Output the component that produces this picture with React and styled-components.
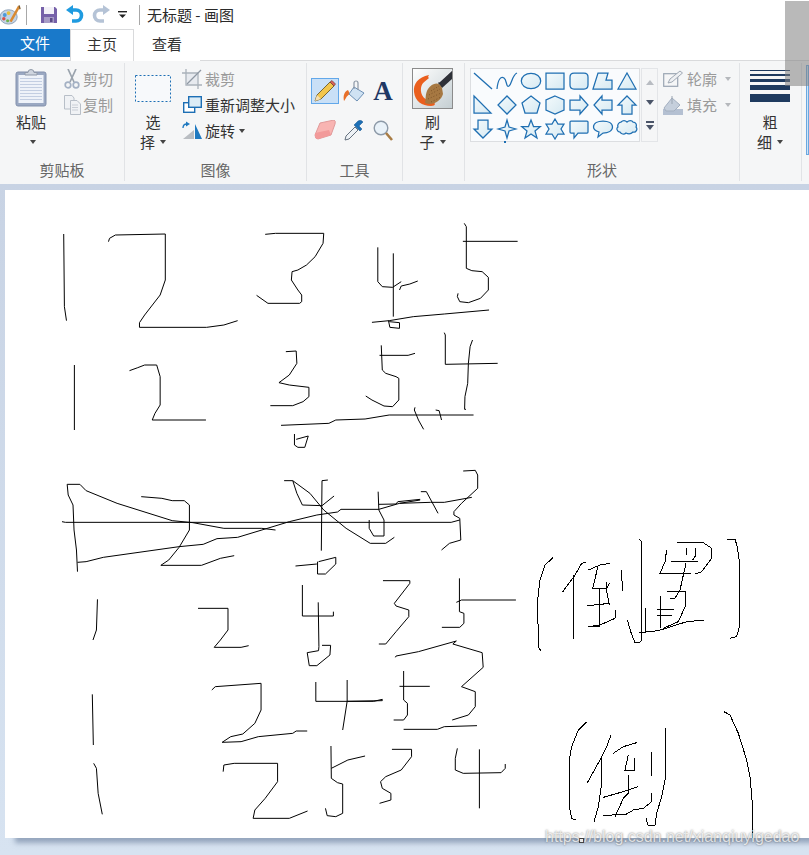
import React from "react";
import styled, { createGlobalStyle } from "styled-components";

const Global = createGlobalStyle`
  html, body { margin: 0; padding: 0; background: #fff; }
  body { font-family: "Noto Sans CJK SC", "Liberation Sans", sans-serif; overflow: hidden; }
  * { box-sizing: border-box; }
`;
const Page = styled.div`
  position: relative; width: 809px; height: 855px; display: flex; flex-direction: column; overflow: hidden; background: #fff;
`;
const TitleBar = styled.div`
  height: 29px; display: flex; align-items: center; background: #fff;
`;
const QuickIcon = styled.span`
  display: flex; align-items: center; justify-content: center; width: ${p => p.$w}px; margin-left: ${p => p.$ml || 0}px;
`;
const Sep = styled.span`
  width: 1px; height: 20px; background: #a8a8a8; margin-left: ${p => p.$ml}px;
`;
const TitleText = styled.span`
  margin-left: 7px; font-size: 15px; color: #2a2a2a; line-height: 20px; white-space: pre;
`;
const Tabs = styled.div`
  height: 32px; display: flex; align-items: flex-start; border-bottom: 1px solid #d9dadc; background: #fff;
`;
const FileTab = styled.div`
  width: 70px; height: 28px; background: #1979ca; color: #fff; font-size: 15px; padding-bottom: 1px; display: flex; align-items: center; justify-content: center;
`;
const Tab = styled.div`
  width: ${p => p.$active ? 64 : 66}px; height: 32px; padding-bottom: 4px; font-size: 15px; color: #333; display: flex; align-items: center; justify-content: center;
  background: #fff; border: 1px solid ${p => p.$active ? "#d9dadc" : "transparent"}; border-bottom: 0; position: relative;
  z-index: ${p => p.$active ? 1 : 0}; margin-bottom: -1px;
`;
const Ribbon = styled.div`
  height: 123px; display: flex; background: #f5f6f7;
`;
const Group = styled.section`
  width: ${p => p.$w}px; margin: 2px 0 3px; border-right: 1px solid #e1e3e6; display: flex; flex-direction: column;
`;
const LastGroup = styled.section`
  flex: 1; padding-left: 4px; padding-top: 4px;
`;
const ColorSlot = styled.div`
  height: 90px; background: #cfe4f7; border: 1px solid #6aa7e0;
`;
const GroupBody = styled.div`
  flex: 1; display: flex; padding: 3px 0 0 ${p => p.$pl || 0}px; min-height: 0;
`;
const GroupLabel = styled.div`
  height: 20px; line-height: 18px; text-align: center; font-size: 15px; color: #666;
`;
const BigButton = styled.div`
  width: ${p => p.$w}px; display: flex; flex-direction: column; align-items: center; flex: none;
`;
const BigIcon = styled.div`
  height: 46px; display: flex; align-items: center; justify-content: center; padding-bottom: 2px;
`;
const BigLine = styled.div`
  height: 20px; line-height: 20px; font-size: 15px; color: #333; display: flex; align-items: center; gap: ${p => p.$gap ?? 5}px; white-space: nowrap;
`;
const Caret = styled.i`
  display: inline-block; width: 0; height: 0; border-left: 3.5px solid transparent; border-right: 3.5px solid transparent;
  border-top: 4px solid ${p => p.$muted ? "#b5b8bc" : "#444"}; margin-left: ${p => p.$ml || 0}px;
`;
const SmallCol = styled.div`
  display: flex; flex-direction: column; margin-left: ${p => p.$ml || 0}px;
`;
const SmallRow = styled.div`
  height: 26px; padding-bottom: 1px; display: flex; align-items: center; gap: ${p => p.$gap ?? 4}px; font-size: 15px; color: ${p => p.$muted ? "#9a9a9a" : "#333"}; white-space: nowrap;
`;
const SmallIcon = styled.span`
  width: 20px; height: 20px; display: flex; align-items: center; justify-content: center; flex: none;
`;
const ToolGrid = styled.div`
  margin: 12px 0 0 4px; display: grid; grid-template-columns: 28px 28px 28px; grid-template-rows: 26px 26px; column-gap: 1px; row-gap: 13px;
`;
const Tool = styled.div`
  display: flex; align-items: center; justify-content: center;
  border: 1px solid ${p => p.$on ? "#62a8ea" : "transparent"}; background: ${p => p.$on ? "#c9e0f7" : "transparent"};
`;
const TextToolGlyph = styled.span`
  font-family: "Liberation Serif", serif; font-weight: 700; font-size: 27px; line-height: 26px; color: #1f3864;
`;
const Gallery = styled.div`
  position: relative; margin-top: 2px; width: 170px; height: 74px; display: grid; grid-template-columns: repeat(7, 24px); grid-auto-rows: 24px;
  border: 1px solid #dcdee1; background: #f9fbfd;
  &::after { content: ""; position: absolute; left: 33px; bottom: -2px; width: 2px; height: 2px; background: #1f6fb2; }
`;
const ShapeCell = styled.div`
  display: flex; align-items: center; justify-content: center;
`;
const ScrollBox = styled.div`
  margin: 2px 0 0 1px; width: 17px; height: 74px; border: 1px solid #e3e5e8; display: flex; flex-direction: column; align-items: center; justify-content: space-around; padding: 3px 0;
`;
const ScrollUp = styled.i`
  width: 0; height: 0; border-left: 4px solid transparent; border-right: 4px solid transparent; border-bottom: 5px solid #b8bcc2;
`;
const ScrollDown = styled.i`
  width: 0; height: 0; border-left: 4px solid transparent; border-right: 4px solid transparent; border-top: 5px solid #4a5468;
`;
const ScrollMore = styled.div`
  display: flex; flex-direction: column; align-items: center; gap: 2px;
  &::before { content: ""; width: 8px; height: 2px; background: #4a5468; }
  &::after { content: ""; width: 0; height: 0; border-left: 4px solid transparent; border-right: 4px solid transparent; border-top: 5px solid #4a5468; }
`;
const Workspace = styled.main`
  flex: 1; padding: 6px 0 0 5px; background: linear-gradient(#c8d3e4, #d7e3f1);
`;
const Canvas = styled.div`
  height: 648px; background: #fff; box-shadow: 8px 7px 5px -2px rgba(105, 125, 155, .6);
`;
const Drawing = styled.svg`
  display: block; width: 804px; height: 648px;
`;
const Handle = styled.div`
  position: absolute; left: 579px; top: 838px; width: 5px; height: 5px; background: #fff; border: 1px solid #444;
`;
const Watermark = styled.div`
  position: absolute; left: 545px; top: 827px; font-family: "Liberation Sans", sans-serif; font-size: 16px; line-height: 20px; color: rgba(255,255,255,.75);
  text-shadow: 0 0 2px rgba(70,70,70,.75); white-space: nowrap;
`;
const ScrollOverlay = styled.div`
  position: absolute; right: 0; top: 1px; width: 24px; height: 85px; background: rgba(128,128,128,.55);
`;

const Palette = () => (
  <svg width="22" height="22" viewBox="0 0 22 22">
    <ellipse cx="9" cy="13" rx="9" ry="7.5" fill="#c3d3e4" stroke="#8ea2b8" />
    <circle cx="5" cy="11" r="2" fill="#4d9ad8" /><circle cx="9" cy="9" r="2" fill="#e8c13a" /><circle cx="4" cy="15" r="1.8" fill="#d8504a" /><circle cx="8" cy="17" r="1.6" fill="#6fb34c" />
    <path d="M20 2 L11 18" stroke="#d98a32" strokeWidth="2.6" /><path d="M20 1 L21 5" stroke="#7a5a30" strokeWidth="1.4" />
  </svg>
);
const Save = () => (
  <svg width="16" height="16" viewBox="0 0 16 16">
    <path d="M0 0 H14 L16 2 V16 H0Z" fill="#7661a9" /><rect x="3" y="0" width="10" height="7" fill="#f3f1f8" /><rect x="3" y="10" width="10" height="6" fill="#a79cc6" /><rect x="9" y="11" width="2.5" height="4" fill="#5a4a86" />
  </svg>
);
const Undo = ({ color, flip }) => (
  <svg width="18" height="19" viewBox="0 0 18 19" style={flip ? { transform: "scaleX(-1)" } : undefined}>
    <path d="M5 5 H10 A5.5 5.5 0 0 1 10 16 H6" fill="none" stroke={color} strokeWidth="3.6" /><path d="M0 5 L7 0 V10Z" fill={color} />
  </svg>
);
const QuickCaret = () => (
  <svg width="9" height="8" viewBox="0 0 9 8"><rect x="0" y="0" width="9" height="1.4" fill="#222" /><path d="M1 3.5 H8 L4.5 7Z" fill="#222" /></svg>
);
const Clipboard = () => (
  <svg width="32" height="38" viewBox="0 0 32 38">
    <rect x="1" y="3" width="30" height="34" rx="2" fill="#9aa8c2" stroke="#8391ad" />
    <rect x="3.5" y="6" width="25" height="28" fill="#eef2f9" />
    {[9, 12, 15, 18, 21, 24, 27, 30].map(y => <rect key={y} x="5" y={y} width="22" height="1" fill="#c3cee2" />)}
    <path d="M10 6 V3.5 H13 A3 3 0 0 1 19 3.5 H22 V6Z" fill="#cfd5df" stroke="#8f98a8" />
  </svg>
);
const Scissors = () => (
  <svg width="16" height="20" viewBox="0 0 16 20" fill="none" stroke="#9aa3ad" strokeWidth="1.7">
    <path d="M4 0 L10 13 M12 0 L6 13" /><circle cx="4" cy="16" r="2.8" stroke="#a4b1c4" /><circle cx="12" cy="16" r="2.8" stroke="#a4b1c4" />
  </svg>
);
const CopyIcon = () => (
  <svg width="17" height="20" viewBox="0 0 17 20" fill="#f0f2f5" stroke="#b8bfc8">
    <path d="M.5 .5 H8 L10 3 V14 H.5Z" /><path d="M6.5 5.5 H13 L16.5 9 V19.5 H6.5Z" /><path d="M8 10 H14 M8 12.5 H14 M8 15 H14" stroke="#c9ced6" />
  </svg>
);
const DashedSelect = () => (
  <svg width="36" height="27" viewBox="0 0 36 27"><rect x=".5" y=".5" width="35" height="26" fill="#f7f9fb" stroke="#1d6fb5" strokeDasharray="2 2" /></svg>
);
const Crop = () => (
  <svg width="20" height="20" viewBox="0 0 20 20" fill="none" stroke="#a9b1bb" strokeWidth="1.3">
    <rect x="4.5" y="4.5" width="11" height="11" fill="#dde3ea" fillOpacity=".6" stroke="none" /><path d="M4 0 V16 H20" /><path d="M0 4 H16 V20" /><path d="M5 15 L19 1" stroke="#8f98a3" />
  </svg>
);
const Resize = () => (
  <svg width="19" height="17" viewBox="0 0 19 17">
    <rect x=".7" y="6.7" width="11" height="9.6" fill="#fff" stroke="#1d6fb5" strokeWidth="1.4" />
    <rect x="5.7" y=".7" width="12.6" height="10.6" fill="#dcecf6" stroke="#1d6fb5" strokeWidth="1.4" />
  </svg>
);
const Rotate = () => (
  <svg width="20" height="19" viewBox="0 0 20 19">
    <path d="M1 18 L12 9 V18Z" fill="#b9bdc2" /><path d="M13 3 L20 18 H13Z" fill="#1f79c0" />
    <path d="M1 7 C1 4 2 3 5 3" fill="none" stroke="#1f79c0" strokeWidth="1.3" /><path d="M4 0.5 L8 3 L4 5.5Z" fill="#1f79c0" />
  </svg>
);
const Pencil = () => (
  <svg width="22" height="22" viewBox="0 0 22 22">
    <path d="M1 21 L3 15 L16 2 L20 6 L7 19Z" fill="#f2c64c" stroke="#6a5a2c" strokeWidth=".9" />
    <path d="M16 2 L18 0.5 L21.5 4 L20 6Z" fill="#d8605a" stroke="#6a3a2c" strokeWidth=".6" /><path d="M1 21 L3 15 L7 19Z" fill="#f4dfb2" />
  </svg>
);
const Bucket = () => (
  <svg width="22" height="22" viewBox="0 0 22 22">
    <path d="M5 10 C1 12 0 16 1 21 C3 19 3 16 7 14Z" fill="#e8702a" />
    <path d="M11 7 L21 13 L14 21 L6 14Z" fill="#cfe2f3" stroke="#6d90b5" />
    <path d="M11 9 V3 A2 2 0 0 1 15 3 V10" fill="none" stroke="#8c97a5" strokeWidth="1.2" />
  </svg>
);
const Eraser = () => (
  <svg width="22" height="20" viewBox="0 0 22 20">
    <path d="M6 3 L20 0 Q22 1 21 4 L17 15 L4 19 Q1 19 1 15Z" fill="#f8b4b2" stroke="#e09a9a" /><path d="M1 13 L15 10 L17 15 L4 19 Q1 19 1 15Z" fill="#f29a9a" />
  </svg>
);
const Dropper = () => (
  <svg width="21" height="21" viewBox="0 0 21 21">
    <path d="M1 20 L2 16 L11 7 L14 10 L5 19Z" fill="#eef2f6" stroke="#66727f" />
    <path d="M10 5 L16 11 L18 9 L15 6 L19 2 Q17 -1 14 1 L11 4Z" fill="#1d6fb5" stroke="#15528a" strokeWidth=".5" />
  </svg>
);
const Magnifier = () => (
  <svg width="20" height="21" viewBox="0 0 20 21">
    <circle cx="8" cy="8" r="6.8" fill="#e9f2f9" stroke="#8d9aa8" strokeWidth="1.4" /><path d="M13 13 L19 20" stroke="#a87c45" strokeWidth="2.6" />
  </svg>
);
const BrushIcon = () => (
  <svg width="41" height="41" viewBox="0 0 41 41">
    <defs><linearGradient id="bb" x1="0" y1="0" x2="1" y2="1"><stop offset="0" stopColor="#ffffff" /><stop offset="1" stopColor="#c4ced2" /></linearGradient></defs>
    <rect x=".5" y=".5" width="40" height="40" fill="url(#bb)" stroke="#8b8b8b" />
    <path d="M40 2 L26 15 L30 20 L40 11Z" fill="#2e3138" /><path d="M40 2 L27 14" stroke="#e8ebee" strokeWidth="1.4" />
    <path d="M17 7 C6 9 1 16 2 24 C3 33 10 38 19 38 C24 38 24 35 20 33 C13 33 8 27 9 20 C10 14 14 13 17 10 L16 9 L17 7Z" fill="#ea5f1e" />
    <path d="M30 20 C27 13 20 15 16 21 C13 26 14 31 13 35 C21 38 29 33 31 26 Z" fill="#a67842" />
    <path d="M19 23 L27 18 M17 27 L28 21 M16 31 L29 25 M19 34 L29 29" stroke="#7d5227" strokeWidth="1" strokeDasharray="1 2" />
  </svg>
);
const OutlineIcon = () => (
  <svg width="20" height="17" viewBox="0 0 20 17">
    <rect x=".7" y="3.7" width="14" height="12.6" fill="#f5f6f7" stroke="#9aa5b2" strokeWidth="1.2" />
    <path d="M5 13 L7 9 L17 1 L19.5 3 L9 12Z" fill="#eef0f3" stroke="#a0a9b4" />
  </svg>
);
const FillIcon = () => (
  <svg width="20" height="20" viewBox="0 0 20 20">
    <rect x="0" y="14" width="20" height="6" fill="#b4c0d2" /><path d="M1 13 L9 3 L17 10 L11 16 H3Z" fill="#c5cfdc" stroke="#a3afc0" /><path d="M9 9 V1" stroke="#9aa5b2" />
  </svg>
);
const ThickLines = () => (
  <svg width="40" height="36" viewBox="0 0 40 36">
    <rect y="0" width="40" height="1" fill="#1e3a5f" /><rect y="4" width="40" height="2" fill="#1e3a5f" /><rect y="9" width="40" height="3" fill="#1e3a5f" /><rect y="15" width="40" height="5" fill="#1e3a5f" /><rect y="24" width="40" height="8" fill="#1e3a5f" />
  </svg>
);

const shapes = [
  "M1 2 L19 18", "M0 18 C1 8 4 5 7 7 C10 9 9 17 12 15 C15 13 15 4 20 2",
  "E", "M1 2 H19 V18 H1Z", "M5 2 H15 Q19 2 19 6 V14 Q19 18 15 18 H5 Q1 18 1 14 V6 Q1 2 5 2Z",
  "M0 18 L5 2 H15 L13 9 H19 V18Z", "M10 2 L19 18 H1Z",
  "M1 1 L18 18 H1Z", "M10 1 L19 10 L10 19 L1 10Z", "M10 1 L19 8 L16 18 H4 L1 8Z", "M10 1 L19 5 V15 L10 19 L1 15 V5Z",
  "M1 5 H11 V1 L19 10 L11 19 V15 H1Z", "M19 5 H9 V1 L1 10 L9 19 V15 H19Z", "M10 1 L19 10 H15 V19 H5 V10 H1Z",
  "M5 1 H15 V10 H19 L10 19 L1 10 H5Z", "M10 1 L12 8 L19 10 L12 12 L10 19 L8 12 L1 10 L8 8Z",
  "M10 1 L12.5 7.5 L19.5 7.5 L14 12 L16 19 L10 15 L4 19 L6 12 L.5 7.5 L7.5 7.5Z",
  "M10 0 L13 5 H19 L16 10 L19 15 H13 L10 20 L7 15 H1 L4 10 L1 5 H7Z",
  "M2 2 H18 Q19 2 19 3 V13 Q19 14 18 14 H9 L5 19 V14 H2 Q1 14 1 13 V3 Q1 2 2 2Z",
  "M10 2 C15 2 19.5 4 19.5 8 C19.5 12 15 14 10 14 L5 18 L6 13 C3 12 .5 10.5 .5 8 C.5 4 5 2 10 2Z",
  "M4 3 C6 1 8 1 10 3 C12 1 15 1 16 3 C19 3 20 6 19 8 C21 10 19 14 16 13 C14 15 11 15 9 14 C7 16 4 15 3 13 C0 13 -1 9 1 8 C0 6 2 3 4 3Z",
];
const Shape = ({ d, i }) => {
  const fill = i < 2 ? "none" : `url(#sg${i})`;
  const common = { fill, stroke: "#1f6fb2", strokeWidth: 1.25 };
  return (
    <svg width="22" height="22" viewBox="-1 -1 22 22">
      <defs><linearGradient id={`sg${i}`} x1="0" y1="0" x2="1" y2="1"><stop offset="0" stopColor="#f4fafc" /><stop offset="1" stopColor="#d6e9f2" /></linearGradient></defs>
      {d === "E" ? <ellipse cx="10" cy="10" rx="9.7" ry="7.7" {...common} /> : <path d={d} {...common} />}
    </svg>
  );
};

const top = [
  "M185,102 L187,320 L193,362",
  "M315,125 L318,115 L335,105 L480,102 L480,240 L465,285 L420,345 L405,368 L405,382 L600,382 L650,375 L690,362",
  "M770,103 L800,100 L940,100 L938,130 L915,170 L890,195 L865,210 L848,215 L846,240 L865,270 L876,285 L876,305 L870,310 L778,310 L745,286",
  "M1097,142 L1097,245 L1110,260 L1140,262 L1165,245", "M1142,160 L1142,350", "M1160,270 L1165,258 L1190,252 L1213,243",
  "M1348,70 L1354,80 L1354,205 L1370,212 L1400,215 L1418,232 L1418,270 L1395,295 L1360,308 L1335,305 L1328,290 L1330,280", "M1344,124 L1503,124",
  "M1080,367 L1130,362 L1200,350 L1290,342 L1420,330", "M1128,362 L1132,382 L1160,385 L1160,368 L1130,365",
  "M216,495 L216,690", "M376,512 L400,503 L420,495 L455,495 L465,530 L465,615 L450,640 L442,660 L598,660",
  "M830,455 L860,453 L862,490 L840,525 L810,548 L840,555 L897,562 L897,590 L880,605 L850,617 L785,617",
  "M1107,436 L1110,510 L1120,520 L1150,530 L1158,535 L1158,600 L1140,620 L1115,618 L1080,600 L1062,588", "M1102,466 L1185,466 L1205,460",
  "M1290,398 L1293,405 L1293,493 L1445,490", "M1372,420 L1365,440 L1360,490 L1358,550 L1350,590 L1349,628 L1353,628",
  "M816,676 L955,670 L975,660 L1060,657 L1130,645 L1375,645", "M1205,622 L1203,630 L1215,660 L1230,688", "M1265,630 L1275,632 L1282,660",
  "M855,702 L855,735 L865,742 L885,742 L895,708 L860,718",
];
const mid = [
  "M195,73 L198,105 L212,135 L215,210 L222,270 L225,335",
  "M195,73 L232,73 L250,92 L340,130 L500,182 L560,188 L650,205 L760,205 L800,210",
  "M410,110 L470,115 L500,122 L535,122 L550,135 L550,210 L520,262 L490,300 L467,316 L585,316 L640,295 L680,287",
  "M180,185 L190,187 L1310,187 L1335,180",
  "M225,307 L250,305 L300,292 L520,260 L590,253 L630,236 L690,232 L840,185 L920,165 L980,156 L990,148 L1100,148 L1160,130 L1220,120",
  "M1098,95 L1100,150 L1115,180 L1115,228 L1085,228 L1072,205 L1072,180",
  "M1100,133 L1150,132 L1155,125 L1220,118", "M1222,95 L1238,95 L1272,160", "M1160,130 L1250,127 L1290,127 L1370,112",
  "M825,62 L850,62 L862,100 L878,135 L935,137 L970,108",
  "M850,62 L900,100 L940,150 L1005,205 L1075,250 L1120,250 L1145,232",
  "M952,60 L935,62 L933,272",
  "M1345,33 L1380,31 L1387,45 L1387,85 L1340,130 L1318,155 L1318,165 L1335,175 L1338,240 L1305,250 L1282,270",
  "M858,318 L920,312", "M922,305 L922,342 L945,342 L975,312 L975,292 L925,305",
  "M283,418 L280,510 L270,540",
  "M575,445 L662,445 L662,510 L640,540 L622,562 L700,562 L722,557",
  "M878,375 L878,468 L968,468 L968,455", "M924,427 L926,560 L925,572 L892,578 L898,617 L920,617 L958,585 L960,556 L935,556",
  "M1112,362 L1190,362 L1190,370 L1145,430 L1150,438 L1187,450 L1187,470 L1150,515 L1120,552 L1100,552",
  "M1334,355 L1334,455 L1347,460 L1347,490 L1335,502 L1283,502", "M1325,427 L1340,420 L1498,420",
  "M268,703 L271,855",
  "M615,690 L625,680 L758,670 L758,750 L740,790 L705,822 L670,830 L645,847 L700,845 L750,830 L850,820 L860,813 L892,813",
  "M917,666 L917,724 L1085,724 L1110,718 L1110,722 L1008,724", "M1008,660 L1008,724 L995,810",
  "M1172,633 L1172,720 L1183,730 L1183,765 L1172,780 L1143,780", "M1160,679 L1248,679",
  "M1148,592 L1150,588 L1215,575 L1325,543 L1315,552 L1400,578 L1403,622 L1340,680 L1380,695 L1380,740 L1360,765 L1313,780",
  "M1172,808 L1270,808 L1290,800 L1385,797",
  "M272,910 L280,925 L285,1000 L297,1063",
  "M648,935 L650,915 L680,910 L806,910 L806,965 L770,1015 L740,1050 L735,1075 L840,1075 L893,1053",
  "M961,858 L962,955 L980,968 L995,972 L995,1060 L975,1070 L950,1067 L945,1045", "M962,925 L1010,900 L1060,888",
  "M1138,868 L1195,868 L1195,890 L1165,930 L1120,950 L1105,965 L1110,985 L1135,1000 L1135,1020 L1102,1030",
  "M1328,865 L1322,895 L1322,930 L1345,940 L1455,938 L1467,925 L1467,912", "M1392,868 L1392,1045",
];
const right = [
  "M160,112 L135,135 L120,180 L113,240 L115,380 L122,392",
  "M258,127 L245,130 L225,165 L187,217", "M220,165 L220,358",
  "M265,150 L300,135 L330,130", "M295,135 L278,205 L320,205 L328,190", "M318,185 L318,205 L328,255", "M298,205 L298,320 L265,320", "M262,257 L330,250", "M265,320 L300,315 L345,295 L347,270",
  "M365,150 L367,212", "M418,58 L425,65 L425,360 L418,368 L405,368 L392,335 L382,300",
  "M530,68 L610,68 L635,85 L635,115 L605,155 L585,162", "M500,90 L495,125 L480,160 L573,160", "M512,125 L595,125", "M558,85 L558,105", "M585,85 L585,110 L578,120",
  "M558,130 L540,210 L525,235 L510,235", "M502,213 L555,213 L555,260 L535,305 L490,325", "M480,225 L482,325", "M470,268 L522,268", "M470,285 L515,285", "M435,262 L438,335", "M418,338 L475,332 L560,305 L612,300",
  "M682,60 L705,58 L712,80 L718,125 L718,320 L710,350 L690,355",
  "M260,606 L235,630 L215,680 L208,720 L208,860 L215,895 L227,900",
  "M333,645 L320,680 L300,720 L262,788", "M305,710 L305,790 L295,860 L282,905",
  "M340,700 L370,680 L410,668", "M385,705 L375,750 L402,750 L402,715", "M385,765 L385,820 L370,835 L345,890", "M310,832 L370,815 L415,800",
  "M308,887 L380,882 L400,870 L430,865 L455,845 L455,820", "M453,695 L453,768",
  "M495,618 L497,770 L485,830 L470,880 L465,915 L445,918 L438,895",
  "M672,575 L690,585 L715,640 L740,720 L750,770 L757,850 L757,955",
];
const Layer = ({ x, y, sx, strokes }) => (
  <g transform={`translate(${x} ${y}) scale(${sx} ${1 / 3})`} fill="none" stroke="#000" strokeWidth="1" shapeRendering="crispEdges">
    {strokes.map((d, i) => <path key={i} d={d} vectorEffect="non-scaling-stroke" />)}
  </g>
);

export default function App() {
  return (
    <Page>
      <Global />
      <TitleBar>
        <QuickIcon $w={21}><Palette /></QuickIcon>
        <Sep $ml={5} />
        <QuickIcon $w={16} $ml={14}><Save /></QuickIcon>
        <QuickIcon $w={18} $ml={9}><Undo color="#1f9be0" /></QuickIcon>
        <QuickIcon $w={18} $ml={8}><Undo color="#b5c3d6" flip /></QuickIcon>
        <QuickIcon $w={9} $ml={8}><QuickCaret /></QuickIcon>
        <Sep $ml={12} />
        <TitleText>无标题 - 画图</TitleText>
      </TitleBar>
      <Tabs>
        <FileTab>文件</FileTab>
        <Tab $active>主页</Tab>
        <Tab>查看</Tab>
      </Tabs>
      <Ribbon>
        <Group $w={125}>
          <GroupBody>
            <BigButton $w={62}>
              <BigIcon><Clipboard /></BigIcon>
              <BigLine>粘贴</BigLine>
              <BigLine><Caret $ml={4} /></BigLine>
            </BigButton>
            <SmallCol>
              <SmallRow $muted $gap={1}><SmallIcon><Scissors /></SmallIcon>剪切</SmallRow>
              <SmallRow $muted $gap={1}><SmallIcon><CopyIcon /></SmallIcon>复制</SmallRow>
            </SmallCol>
          </GroupBody>
          <GroupLabel>剪贴板</GroupLabel>
        </Group>
        <Group $w={182}>
          <GroupBody>
            <BigButton $w={56}>
              <BigIcon><DashedSelect /></BigIcon>
              <BigLine>选</BigLine>
              <BigLine>择<Caret /></BigLine>
            </BigButton>
            <SmallCol $ml={1}>
              <SmallRow $muted $gap={3}><SmallIcon><Crop /></SmallIcon>裁剪</SmallRow>
              <SmallRow $gap={3}><SmallIcon><Resize /></SmallIcon>重新调整大小</SmallRow>
              <SmallRow $gap={3}><SmallIcon><Rotate /></SmallIcon>旋转<Caret $ml={1} /></SmallRow>
            </SmallCol>
          </GroupBody>
          <GroupLabel>图像</GroupLabel>
        </Group>
        <Group $w={96}>
          <GroupBody>
            <ToolGrid>
              <Tool $on><Pencil /></Tool>
              <Tool><Bucket /></Tool>
              <Tool><TextToolGlyph>A</TextToolGlyph></Tool>
              <Tool><Eraser /></Tool>
              <Tool><Dropper /></Tool>
              <Tool><Magnifier /></Tool>
            </ToolGrid>
          </GroupBody>
          <GroupLabel>工具</GroupLabel>
        </Group>
        <Group $w={62}>
          <GroupBody>
            <BigButton $w={59}>
              <BigIcon><BrushIcon /></BigIcon>
              <BigLine>刷</BigLine>
              <BigLine>子<Caret /></BigLine>
            </BigButton>
          </GroupBody>
          <GroupLabel>&nbsp;</GroupLabel>
        </Group>
        <Group $w={275}>
          <GroupBody $pl={5}>
            <Gallery>
              {shapes.map((d, i) => <ShapeCell key={i}><Shape d={d} i={i} /></ShapeCell>)}
            </Gallery>
            <ScrollBox><ScrollUp /><ScrollDown /><ScrollMore /></ScrollBox>
            <SmallCol $ml={5}>
              <SmallRow $muted><SmallIcon><OutlineIcon /></SmallIcon>轮廓<Caret $muted $ml={4} /></SmallRow>
              <SmallRow $muted><SmallIcon><FillIcon /></SmallIcon>填充<Caret $muted $ml={4} /></SmallRow>
            </SmallCol>
          </GroupBody>
          <GroupLabel>形状</GroupLabel>
        </Group>
        <Group $w={62}>
          <GroupBody>
            <BigButton $w={60}>
              <BigIcon><ThickLines /></BigIcon>
              <BigLine>粗</BigLine>
              <BigLine>细<Caret /></BigLine>
            </BigButton>
          </GroupBody>
          <GroupLabel>&nbsp;</GroupLabel>
        </Group>
        <LastGroup><ColorSlot /></LastGroup>
      </Ribbon>
      <Workspace>
        <Canvas>
          <Drawing viewBox="5 190 804 648">
            <Layer x={0} y={200} sx={0.3444} strokes={top} />
            <Layer x={0} y={460} sx={0.3444} strokes={mid} />
            <Layer x={500} y={520} sx={1 / 3} strokes={right} />
          </Drawing>
        </Canvas>
      </Workspace>
      <Handle />
      <Watermark>https://blog.csdn.net/xianqiuyigedao</Watermark>
      <ScrollOverlay />
    </Page>
  );
}
